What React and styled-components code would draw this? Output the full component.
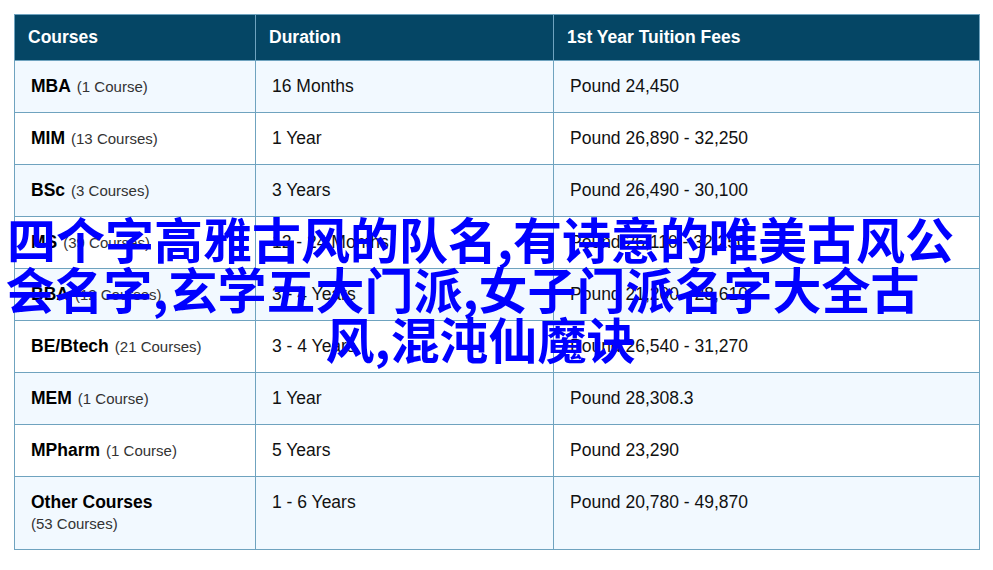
import React from 'react';
import styled, { createGlobalStyle } from 'styled-components';

const GlobalStyle = createGlobalStyle`
  html, body {
    margin: 0;
    padding: 0;
    background: #fff;
  }
  body {
    font-family: "Liberation Sans", Arial, sans-serif;
  }
`;

const Page = styled.div`
  position: relative;
  width: 993px;
  height: 570px;
  padding: 14px 14px 0;
  box-sizing: border-box;
  overflow: hidden;
`;

const Table = styled.table`
  width: 965px;
  table-layout: fixed;
  border-collapse: collapse;
  color: #111;
`;

const HeadCell = styled.th`
  height: 46px;
  padding: 0 0 0 13px;
  box-sizing: border-box;
  background: #054665;
  border: 1px solid #6fa3bf;
  color: #fff;
  font-size: 17.5px;
  font-weight: 700;
  text-align: left;
`;

const Row = styled.tr`
  background: ${props => (props.$shaded ? '#f2f9ff' : '#fff')};
`;

const Cell = styled.td`
  height: 52px;
  padding: 0 0 0 16px;
  box-sizing: border-box;
  border: 1px solid #6fa3bf;
  font-size: 17.5px;
  line-height: 22px;
  vertical-align: middle;

  ${props => props.$plain && 'padding-bottom: 2px;'}
  ${props => props.$tall && `
    height: 73px;
    padding-top: 14px;
    padding-bottom: 0;
    vertical-align: top;
  `}
`;

const CourseName = styled.strong`
  font-size: 17.5px;
  font-weight: 700;
  color: #000;
`;

const CourseCount = styled.span`
  margin-left: ${props => (props.$block ? '0' : '6px')};
  display: ${props => (props.$block ? 'block' : 'inline')};
  font-size: 15px;
  color: #333;
`;

const Headline = styled.h1`
  position: absolute;
  top: 213px;
  left: 0;
  width: 961px;
  margin: 0;
  font-family: "Noto Sans CJK SC", sans-serif;
  font-size: 49px;
  font-weight: 700;
  line-height: 50px;
  color: #0000ff;
  text-align: center;
`;

const HeadlineLine = styled.span`
  display: block;
  white-space: nowrap;
  padding-right: ${props => (props.$shift ? '36px' : '0')};
`;

const rows = [
  ['MBA', '(1 Course)', '16 Months', 'Pound 24,450'],
  ['MIM', '(13 Courses)', '1 Year', 'Pound 26,890 - 32,250'],
  ['BSc', '(3 Courses)', '3 Years', 'Pound 26,490 - 30,100'],
  ['MS', '(39 Courses)', '12 - 24 Months', 'Pound 26,110 - 32,250'],
  ['BBA', '(12 Courses)', '3 - 4 Years', 'Pound 21,200 - 28,610'],
  ['BE/Btech', '(21 Courses)', '3 - 4 Years', 'Pound 26,540 - 31,270'],
  ['MEM', '(1 Course)', '1 Year', 'Pound 28,308.3'],
  ['MPharm', '(1 Course)', '5 Years', 'Pound 23,290'],
  ['Other Courses', '(53 Courses)', '1 - 6 Years', 'Pound 20,780 - 49,870'],
];

export default function App() {
  return (
    <Page>
      <GlobalStyle />
      <Table>
        <colgroup>
          <col style={{ width: 241 }} />
          <col style={{ width: 298 }} />
          <col style={{ width: 426 }} />
        </colgroup>
        <thead>
          <tr>
            <HeadCell>Courses</HeadCell>
            <HeadCell>Duration</HeadCell>
            <HeadCell>1st Year Tuition Fees</HeadCell>
          </tr>
        </thead>
        <tbody>
          {rows.map(([name, count, duration, fee], i) => {
            const tall = i === rows.length - 1;
            return (
              <Row key={name} $shaded={i % 2 === 0}>
                <Cell $tall={tall}>
                  <CourseName>{name}</CourseName>
                  <CourseCount $block={tall}>{count}</CourseCount>
                </Cell>
                <Cell $plain $tall={tall}>{duration}</Cell>
                <Cell $plain $tall={tall}>{fee}</Cell>
              </Row>
            );
          })}
        </tbody>
      </Table>
      <Headline>
        <HeadlineLine>四个字高雅古风的队名,有诗意的唯美古风公</HeadlineLine>
        <HeadlineLine $shift>会名字,玄学五大门派,女子门派名字大全古</HeadlineLine>
        <HeadlineLine>风,混沌仙魔诀</HeadlineLine>
      </Headline>
    </Page>
  );
}
